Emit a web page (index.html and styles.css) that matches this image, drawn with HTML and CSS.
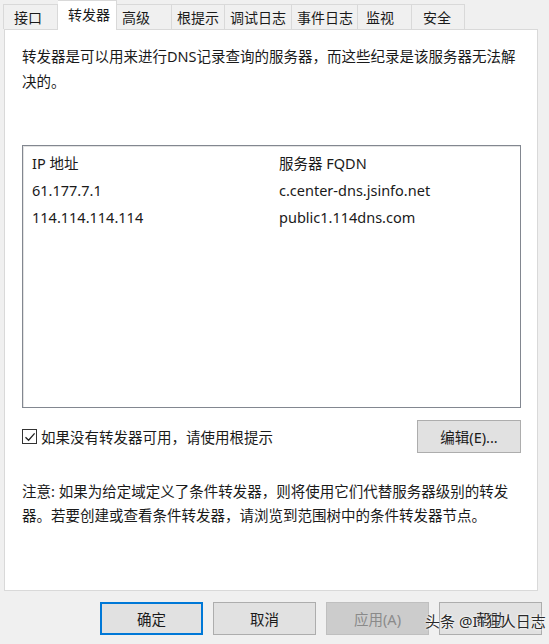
FILE: index.html
```html
<!DOCTYPE html>
<html lang="zh-CN">
<head>
    <meta charset="UTF-8">
    <title>DNS 属性</title>
    <link rel="stylesheet" href="styles.css">
</head>
<body>
    <div class="dialog">
        <div class="tabs">
            <div class="tab tab-ifaces">接口</div>
            <div class="tab tab-fwd active">转发器</div>
            <div class="tab tab-adv">高级</div>
            <div class="tab tab-root">根提示</div>
            <div class="tab tab-debug">调试日志</div>
            <div class="tab tab-event">事件日志</div>
            <div class="tab tab-mon">监视</div>
            <div class="tab tab-sec">安全</div>
        </div>

        <div class="panel">
            <p class="intro">转发器是可以用来进行DNS记录查询的服务器，而这些纪录是该服务器无法解决的。</p>

            <div class="list">
                <div class="row head">
                    <span class="col-ip">IP 地址</span>
                    <span class="col-fqdn">服务器 FQDN</span>
                </div>
                <div class="row">
                    <span class="col-ip">61.177.7.1</span>
                    <span class="col-fqdn">c.center-dns.jsinfo.net</span>
                </div>
                <div class="row">
                    <span class="col-ip">114.114.114.114</span>
                    <span class="col-fqdn">public1.114dns.com</span>
                </div>
            </div>

            <div class="options">
                <label class="check">
                    <span class="box">
                        <svg width="12" height="12" viewBox="0 0 12 12"><path d="M1.5 6.2 L4.6 9.2 L10.6 2.4" fill="none" stroke="#222" stroke-width="1.3"/></svg>
                    </span>
                    如果没有转发器可用，请使用根提示
                </label>
                <button class="btn btn-edit">编辑(E)...</button>
            </div>

            <p class="note">注意: 如果为给定域定义了条件转发器，则将使用它们代替服务器级别的转发器。若要创建或查看条件转发器，请浏览到范围树中的条件转发器节点。</p>
        </div>

        <div class="actions">
            <button class="btn btn-default">确定</button>
            <button class="btn">取消</button>
            <button class="btn" disabled>应用(A)</button>
            <button class="btn">帮助</button>
        </div>

        <div class="watermark">头条 @IT狂人日志</div>
    </div>
</body>
</html>
```

FILE: styles.css
```css
body {
    margin: 0;
    background-color: #f0f0f0;
    font-family: "Noto Sans", "Noto Sans CJK SC", sans-serif;
    font-size: 14.5px;
    color: #1a1a1a;
}
.dialog {
    position: relative;
    width: 549px;
    height: 644px;
}
.tabs {
    display: flex;
    align-items: flex-end;
    height: 29px;
    padding-left: 3px;
}
.tab {
    box-sizing: border-box;
    height: 25px;
    line-height: 25px;
    font-size: 14px;
    white-space: nowrap;
    background-color: #f0f0f0;
    border: 1px solid #d9d9d9;
    border-bottom: none;
    border-left: none;
}
.tab-ifaces { width: 55px; padding-left: 10px; border-left: 1px solid #d9d9d9; }
.tab-fwd    { width: 59px; padding-left: 10px; }
.tab-adv    { width: 55px; padding-left: 5px; }
.tab-root   { width: 53px; padding-left: 5px; }
.tab-debug  { width: 67px; padding-left: 5px; }
.tab-event  { width: 66px; padding-left: 5px; }
.tab-mon    { width: 54px; padding-left: 8px; }
.tab-sec    { width: 53px; padding-left: 11px; }
.tab.active {
    height: 30px;
    line-height: 28px;
    margin-bottom: -1px;
    background-color: #ffffff;
    position: relative;
    z-index: 1;
}
.panel {
    margin: 0 11px 0 4px;
    height: 546px;
    padding: 14px 16px 0 17px;
    background-color: #ffffff;
    border: 1px solid #d9d9d9;
}
.intro {
    margin: 0;
    line-height: 25px;
}
.list {
    margin-top: 51px;
    height: 253px;
    padding: 4px 9px;
    border: 1px solid #828790;
    box-shadow: inset 1px 1px 0 #e3e3e3;
}
.row {
    display: flex;
    height: 27px;
    line-height: 27px;
}
.col-ip {
    width: 247px;
}
.options {
    display: flex;
    align-items: center;
    justify-content: space-between;
    margin-top: 12px;
}
.check {
    display: flex;
    align-items: center;
    gap: 4px;
}
.box {
    display: flex;
    align-items: center;
    justify-content: center;
    width: 13px;
    height: 13px;
    border: 1px solid #333333;
    background-color: #ffffff;
}
.btn {
    width: 103px;
    height: 33px;
    padding: 0;
    font-family: inherit;
    font-size: 14.5px;
    color: #1a1a1a;
    background-color: #e1e1e1;
    border: 1px solid #adadad;
}
.btn-edit {
    width: 104px;
}
.btn:disabled {
    color: #8a8a8a;
    background-color: #cccccc;
    border-color: #bfbfbf;
}
.btn-default {
    border: 2px solid #0078d7;
}
.note {
    margin: 26px 0 0;
    line-height: 24px;
}
.actions {
    display: flex;
    justify-content: flex-end;
    gap: 10px;
    margin-top: 11px;
    padding-right: 7px;
}
.watermark {
    position: absolute;
    left: 425px;
    top: 610px;
    font-size: 15px;
    color: #2a2a2a;
    text-shadow: 0 0 2px #ffffff, 0 0 3px #ffffff;
}
```
